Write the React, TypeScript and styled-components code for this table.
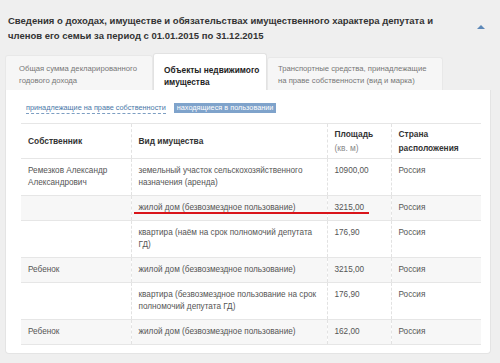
import React from 'react';
import styled, { createGlobalStyle } from 'styled-components';

const GlobalStyle = createGlobalStyle`
  html, body {
    margin: 0;
    padding: 0;
    background: #efefef;
    font-family: "Liberation Sans", Arial, sans-serif;
  }
`;

const Page = styled.div`
  width: 500px;
  height: 363px;
  overflow: hidden;
  box-sizing: border-box;
  padding: 0 9px 0 5px;
`;

const Header = styled.div`
  display: flex;
  justify-content: space-between;
  align-items: flex-start;
  padding: 13px 0 0 3px;
`;

const Title = styled.h2`
  margin: 0;
  font-size: 9.5px;
  line-height: 15px;
  font-weight: bold;
  color: #333;
`;

const Arrow = styled.span`
  margin: 12px 6px 0 0;
  width: 0;
  height: 0;
  border-left: 4px solid transparent;
  border-right: 4px solid transparent;
  border-bottom: 4px solid #5d88b8;
`;

const Tabs = styled.div`
  display: flex;
  align-items: flex-end;
  margin-top: 10px;
`;

const Tab = styled.div<{ $active?: boolean; $width: number; $height: number; $pad: string }>`
  box-sizing: border-box;
  width: ${(p) => p.$width}px;
  height: ${(p) => p.$height}px;
  padding: ${(p) => p.$pad};
  font-size: ${(p) => (p.$active ? '8.3px' : '7.7px')};
  line-height: 12px;
  white-space: nowrap;
  color: ${(p) => (p.$active ? '#222' : '#777')};
  font-weight: ${(p) => (p.$active ? 'bold' : 'normal')};
  background: ${(p) => (p.$active ? '#fff' : '#f6f6f6')};
  border: 1px solid ${(p) => (p.$active ? '#e2e2e2' : '#e8e8e8')};
  border-bottom: none;
  border-radius: 3px 3px 0 0;
`;

const Panel = styled.div`
  background: #fff;
  border: 1px solid #e4e4e4;
  border-top: none;
  border-radius: 0 0 4px 4px;
  padding: 10px 10px 8px 15px;
`;

const Filters = styled.div`
  display: flex;
  align-items: center;
  gap: 8px;
  padding-left: 5px;
  height: 16px;
`;

const FilterLink = styled.span`
  font-size: 7.3px;
  color: #4a78a8;
  border-bottom: 1px dashed #7d9ec2;
  line-height: 10px;
`;

const FilterBadge = styled.span`
  font-size: 7.3px;
  line-height: 10px;
  color: #fff;
  background: #7fa3cb;
  padding: 0 3px;
`;

const Table = styled.table`
  margin-top: 7px;
  width: 460px;
  border-collapse: collapse;
  table-layout: fixed;
  font-size: 8.2px;
  color: #555;
  border-top: 1px solid #e6e6e6;
`;

const Col = styled.col<{ $width: number }>`
  width: ${(p) => p.$width}px;
`;

const Th = styled.th`
  text-align: left;
  vertical-align: middle;
  padding: 3px 7px;
  height: 28px;
  line-height: 14px;
  font-size: 8.4px;
  font-weight: bold;
  color: #333;
  border-left: 1px dashed #e2e2e2;
  border-bottom: 1px solid #e6e6e6;
  &:first-child {
    border-left: none;
  }
`;

const Sub = styled.span`
  display: block;
  font-weight: normal;
  color: #888;
`;

const Row = styled.tr<{ $shaded?: boolean }>`
  background: ${(p) => (p.$shaded ? '#f7f7f7' : '#fff')};
`;

const Td = styled.td`
  position: relative;
  vertical-align: top;
  padding: 6px 7px;
  line-height: 12px;
  border-left: 1px dashed #e2e2e2;
  border-bottom: 1px solid #e6e6e6;
  &:first-child {
    border-left: none;
  }
`;

const RedMark = styled.span`
  position: absolute;
  left: 2px;
  bottom: 6px;
  width: 235px;
  height: 2px;
  background: #d9141a;
`;

const rows = [
  { owner: 'Ремезков Александр Александрович', kind: 'земельный участок сельскохозяйственного назначения (аренда)', area: '10900,00' },
  { owner: '', kind: 'жилой дом (безвозмездное пользование)', area: '3215,00', mark: true },
  { owner: '', kind: 'квартира (наём на срок полномочий депутата ГД)', area: '176,90' },
  { owner: 'Ребенок', kind: 'жилой дом (безвозмездное пользование)', area: '3215,00' },
  { owner: '', kind: 'квартира (безвозмездное пользование на срок полномочий депутата ГД)', area: '176,90' },
  { owner: 'Ребенок', kind: 'жилой дом (безвозмездное пользование)', area: '162,00' },
];

const App: React.FC = () => {
  return (
    <Page>
      <GlobalStyle />
      <Header>
        <Title>
          Сведения о доходах, имуществе и обязательствах имущественного характера депутата и
          <br />
          членов его семьи за период с 01.01.2015 по 31.12.2015
        </Title>
        <Arrow />
      </Header>

      <Tabs>
        <Tab $width={148} $height={35} $pad="7px 4px 0 13px">
          Общая сумма декларированного
          <br />
          годового дохода
        </Tab>
        <Tab $active $width={114} $height={37} $pad="10px 2px 0 10px">
          Объекты недвижимого
          <br />
          имущества
        </Tab>
        <Tab $width={176} $height={33} $pad="5px 4px 0 10px">
          Транспортные средства, принадлежащие
          <br />
          на праве собственности (вид и марка)
        </Tab>
      </Tabs>

      <Panel>
        <Filters>
          <FilterLink>принадлежащие на праве собственности</FilterLink>
          <FilterBadge>находящиеся в пользовании</FilterBadge>
        </Filters>

        <Table>
          <colgroup>
            <Col $width={110} />
            <Col $width={196} />
            <Col $width={64} />
            <Col $width={90} />
          </colgroup>
          <thead>
            <tr>
              <Th>Собственник</Th>
              <Th>Вид имущества</Th>
              <Th>
                Площадь
                <Sub>(кв. м)</Sub>
              </Th>
              <Th>Страна расположения</Th>
            </tr>
          </thead>
          <tbody>
            {rows.map((r, i) => (
              <Row key={i} $shaded={i % 2 === 1}>
                <Td>{r.owner}</Td>
                <Td>
                  {r.kind}
                  {r.mark && <RedMark />}
                </Td>
                <Td>{r.area}</Td>
                <Td>Россия</Td>
              </Row>
            ))}
          </tbody>
        </Table>
      </Panel>
    </Page>
  );
};

export default App;
